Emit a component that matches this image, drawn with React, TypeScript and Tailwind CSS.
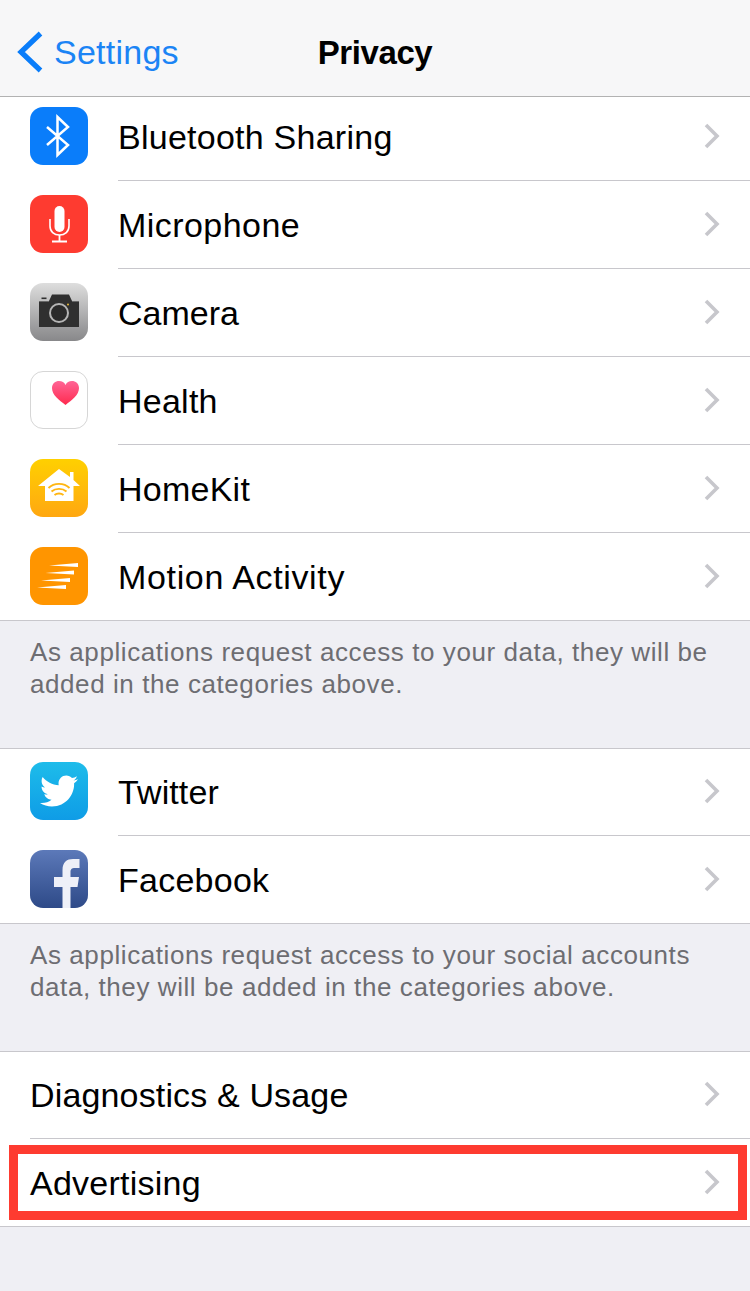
import type { ReactNode } from "react";
import { FaTwitter } from "react-icons/fa";

function Chevron() {
  return (
    <svg width="18" height="28" viewBox="0 0 18 28" className="mb-[2px] shrink-0">
      <path d="M3 3 L14 14 L3 25" fill="none" stroke="#c7c7cc" strokeWidth="3.6" />
    </svg>
  );
}

function BluetoothIcon() {
  return (
    <div className="flex h-[58px] w-[58px] rounded-[13px] bg-[#0a7dfa]">
      <svg width="58" height="58" viewBox="0 0 58 58">
        <path d="M17 20 L38 38 L27.5 48 V10 L38 20 L17 38" fill="none" stroke="#fff" strokeWidth="2.5" />
      </svg>
    </div>
  );
}

function MicIcon() {
  return (
    <div className="flex h-[58px] w-[58px] rounded-[13px] bg-[#fe3b30]">
      <svg width="58" height="58" viewBox="0 0 58 58">
        <rect x="24.5" y="11" width="10" height="26" rx="5" fill="#fff" />
        <path d="M20 24 V31 C20 36.5 24 40 29.5 40 C35 40 39 36.5 39 31 V24" fill="none" stroke="#fff" strokeWidth="1.6" />
        <path d="M29.5 40 V46.5 M22 46.5 H37" fill="none" stroke="#fff" strokeWidth="1.8" />
      </svg>
    </div>
  );
}

function CameraIcon() {
  return (
    <div className="flex h-[58px] w-[58px] rounded-[13px] bg-gradient-to-b from-[#dedede] to-[#88888a]">
      <svg width="58" height="58" viewBox="0 0 58 58">
        <path d="M9 18 H19 L22 11.5 H39 L42 18 H49 V44 H9 Z" fill="#303030" />
        <rect x="11.5" y="14.5" width="5" height="1.6" fill="#303030" />
        <circle cx="29" cy="30" r="9" fill="#2a2a2a" stroke="#b5b5b5" strokeWidth="2" />
        <circle cx="38" cy="21.5" r="1" fill="#e8b93a" />
        <path d="M9 18.5 H19 M42 18.5 H49" stroke="#777" strokeWidth="0.8" />
      </svg>
    </div>
  );
}

function HealthIcon() {
  return (
    <div className="flex h-[58px] w-[58px] rounded-[13px] border border-[#d6d6d6] bg-white">
      <svg width="56" height="56" viewBox="1 1 56 56">
        <defs>
          <linearGradient id="heart" x1="0" y1="0" x2="0" y2="1">
            <stop offset="0" stopColor="#ff6596" />
            <stop offset="1" stopColor="#ff2a4e" />
          </linearGradient>
        </defs>
        <path
          d="M35.5 34 C29 29 22 24 22 17 C22 12.5 25.5 10 29 10 C32 10 34.5 11.5 35.5 14 C36.5 11.5 39 10 42 10 C45.5 10 49 12.5 49 17 C49 24 42 29 35.5 34 Z"
          fill="url(#heart)"
        />
      </svg>
    </div>
  );
}

function HomeKitIcon() {
  return (
    <div className="flex h-[58px] w-[58px] rounded-[13px] bg-gradient-to-b from-[#ffd000] to-[#ffa710]">
      <svg width="58" height="58" viewBox="0 0 58 58">
        <path d="M29 10 L40 18 V13 H43.5 V21 L50 27 H43.5 V42 H15 V27 H8 Z" fill="#fff" />
        <path d="M18.5 29 C24 23.5 34 23.5 39.5 29" fill="none" stroke="#ffb612" strokeWidth="1.9" />
        <path d="M21.5 32.5 C25.5 29 32.5 29 36.5 32.5" fill="none" stroke="#ffb612" strokeWidth="1.9" />
        <path d="M24.5 36 C27 34 31 34 33.5 36" fill="none" stroke="#ffb612" strokeWidth="1.9" />
      </svg>
    </div>
  );
}

function MotionIcon() {
  return (
    <div className="flex h-[58px] w-[58px] rounded-[13px] bg-[#ff9500]">
      <svg width="58" height="58" viewBox="0 0 58 58">
        <path d="M19 18.5 L48 16 V20 Z" fill="#fff" />
        <path d="M15.5 26 L44 23.5 V27.5 Z" fill="#fff" />
        <path d="M11 33.5 L40 31 V35 Z" fill="#fff" />
        <path d="M7 40.5 L36 38 V42 Z" fill="#fff" />
      </svg>
    </div>
  );
}

function TwitterIcon() {
  return (
    <div className="flex h-[58px] w-[58px] items-center justify-center rounded-[13px] bg-gradient-to-b from-[#1ebcea] to-[#0f9ce6]">
      <FaTwitter size={38} color="#fff" />
    </div>
  );
}

function FacebookIcon() {
  return (
    <div className="flex h-[58px] w-[58px] overflow-hidden rounded-[13px] bg-gradient-to-b from-[#5c79b9] to-[#2e4a88]">
      <svg width="58" height="58" viewBox="0 0 58 58">
        <path
          d="M32.5 58 V37 H24 V27 H32.5 V20 C32.5 12 37 9 43 9 H49.5 V18 H45 C41.5 18 40.5 19.5 40.5 22 V27 H49 L47.5 37 H40.5 V58 Z"
          fill="#eef0f8"
        />
      </svg>
    </div>
  );
}

function Row({
  icon,
  label,
  last,
  height = "h-[88px]",
  iconPad = "pb-[3px]",
  textPad = "",
  tracking = "tracking-[0.25px]",
}: {
  icon?: ReactNode;
  label: string;
  last?: boolean;
  height?: string;
  iconPad?: string;
  textPad?: string;
  tracking?: string;
}) {
  return (
    <div className={`flex ${height} bg-white`}>
      {icon && <div className={`flex w-[118px] shrink-0 items-center pl-[30px] ${iconPad}`}>{icon}</div>}
      <div
        className={`flex min-w-0 flex-1 items-center justify-between pr-[29px] ${textPad} ${icon ? "" : "ml-[30px]"} ${
          last ? "" : "border-b border-[#c8c7cc]"
        }`}
      >
        <span className={`text-[34px] leading-none text-black ${tracking}`}>{label}</span>
        <Chevron />
      </div>
    </div>
  );
}

function Note({ children, height }: { children: ReactNode; height: string }) {
  return (
    <div className={`${height} px-[30px] pt-[15px] text-[26px] leading-[32px] tracking-[0.58px] text-[#6d6d72]`}>
      {children}
    </div>
  );
}

export default function App() {
  return (
    <div className="h-[1291px] w-[750px] overflow-hidden bg-[#efeff4] font-['Liberation_Sans',Arial,sans-serif]">
      <header className="relative flex h-[97px] items-center justify-center border-b border-[#b2b2b2] bg-[#f7f7f8]">
        <div className="absolute left-[15px] top-[31px] flex items-center gap-[10px]">
          <svg width="29" height="42" viewBox="0 0 29 42">
            <path d="M25.5 2.5 L6 21 L25.5 39.5" fill="none" stroke="#0a7dfa" strokeWidth="5.2" />
          </svg>
          <span className="text-[34px] leading-none tracking-[0.25px] text-[#1b84f5]">Settings</span>
        </div>
        <h1 className="mt-[8px] text-[33px] font-bold leading-none tracking-[-0.4px] text-black">Privacy</h1>
      </header>

      <section className="border-b border-[#c8c7cc]">
        <Row height="h-[84px]" iconPad="pb-[7px]" textPad="pb-[3px]" icon={<BluetoothIcon />} label="Bluetooth Sharing" />
        <Row icon={<MicIcon />} tracking="tracking-[0.45px]" label="Microphone" />
        <Row icon={<CameraIcon />} tracking="tracking-normal" label="Camera" />
        <Row icon={<HealthIcon />} label="Health" />
        <Row icon={<HomeKitIcon />} label="HomeKit" />
        <Row height="h-[87px]" last iconPad="pb-px" icon={<MotionIcon />} tracking="tracking-[0.65px]" label="Motion Activity" />
      </section>
      <Note height="h-[127px]">
        As applications request access to your data, they will be added in the categories above.
      </Note>

      <section className="border-y border-[#c8c7cc]">
        <Row height="h-[87px]" icon={<TwitterIcon />} tracking="tracking-[0.1px]" label="Twitter" />
        <Row height="h-[87px]" last iconPad="pb-px" icon={<FacebookIcon />} label="Facebook" />
      </section>
      <Note height="h-[127px]">
        As applications request access to your social accounts data, they will be added in the categories above.
      </Note>

      <section className="border-y border-[#c8c7cc]">
        <Row height="h-[87px]" tracking="tracking-[0.15px]" label="Diagnostics &amp; Usage" />
        <div className="relative">
          <Row height="h-[87px]" last label="Advertising" />
          <div className="absolute left-[9px] right-[3px] top-[6px] h-[75px] border-[9px] border-[#fe3b30]" />
        </div>
      </section>
    </div>
  );
}
